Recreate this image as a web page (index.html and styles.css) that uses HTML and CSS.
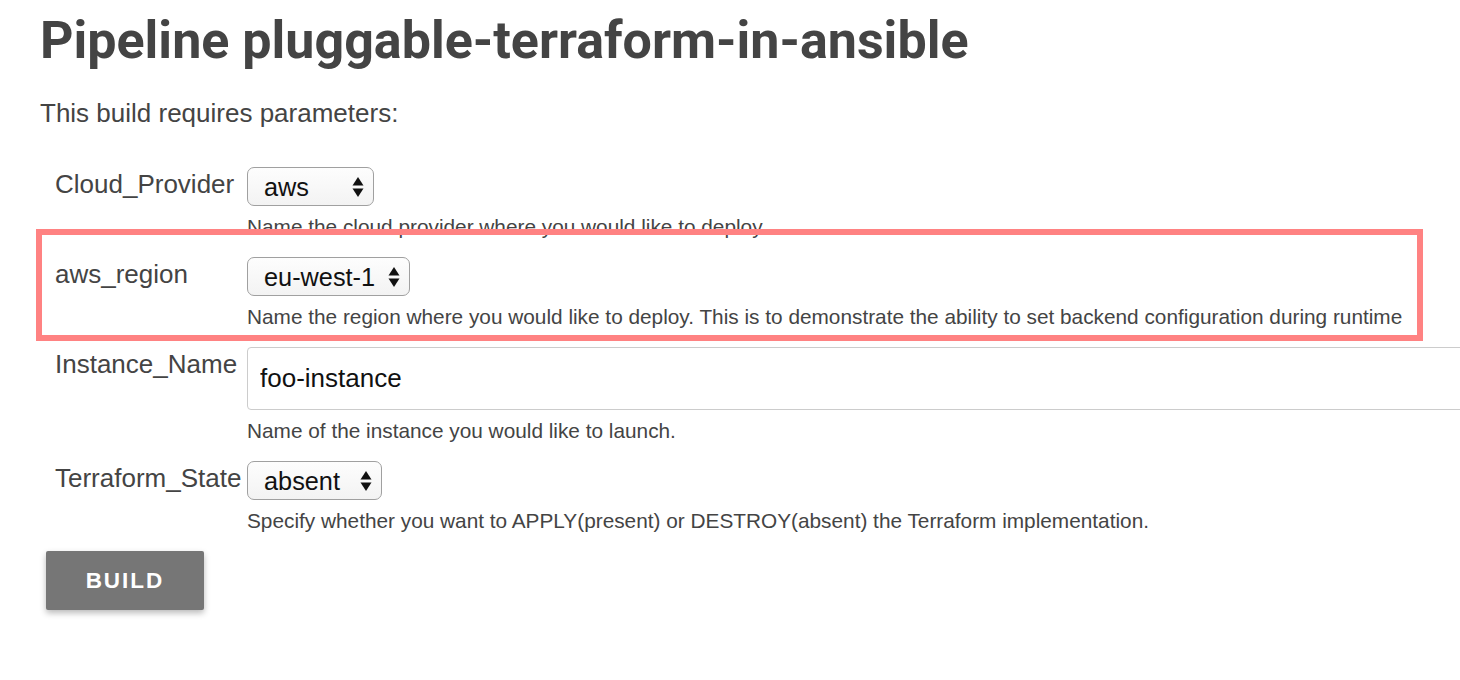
FILE: index.html
```html
<!DOCTYPE html>
<html>
<head>
<meta charset="utf-8">
<link rel="stylesheet" href="styles.css">
</head>
<body>
<div class="page">
  <h1 class="title">Pipeline pluggable-terraform-in-ansible</h1>
  <p class="intro">This build requires parameters:</p>
  <form class="params">
    <div class="row">
      <div class="label">Cloud_Provider</div>
      <div class="field">
        <div class="select-wrap">
          <select class="select w-aws"><option>aws</option></select>
          <svg class="arrows" width="12" height="22" viewBox="0 0 12 22"><path d="M6 1 L11.5 9.5 L0.5 9.5 Z" fill="#111"/><path d="M6 21 L11.5 12.5 L0.5 12.5 Z" fill="#111"/></svg>
        </div>
        <div class="desc">Name the cloud provider where you would like to deploy.</div>
      </div>
    </div>
    <div class="row">
      <div class="label">aws_region</div>
      <div class="field">
        <div class="select-wrap">
          <select class="select w-region"><option>eu-west-1</option></select>
          <svg class="arrows" width="12" height="22" viewBox="0 0 12 22"><path d="M6 1 L11.5 9.5 L0.5 9.5 Z" fill="#111"/><path d="M6 21 L11.5 12.5 L0.5 12.5 Z" fill="#111"/></svg>
        </div>
        <div class="desc">Name the region where you would like to deploy. This is to demonstrate the ability to set backend configuration during runtime</div>
      </div>
    </div>
    <div class="row">
      <div class="label">Instance_Name</div>
      <div class="field">
        <input class="text" type="text" value="foo-instance">
        <div class="desc">Name of the instance you would like to launch.</div>
      </div>
    </div>
    <div class="row">
      <div class="label">Terraform_State</div>
      <div class="field">
        <div class="select-wrap">
          <select class="select w-state"><option>absent</option></select>
          <svg class="arrows" width="12" height="22" viewBox="0 0 12 22"><path d="M6 1 L11.5 9.5 L0.5 9.5 Z" fill="#111"/><path d="M6 21 L11.5 12.5 L0.5 12.5 Z" fill="#111"/></svg>
        </div>
        <div class="desc">Specify whether you want to APPLY(present) or DESTROY(absent) the Terraform implementation.</div>
      </div>
    </div>
    <button class="build" type="button">BUILD</button>
  </form>
  <div class="highlight"></div>
</div>
</body>
</html>
```
FILE: styles.css
```css
html, body {
  margin: 0;
  padding: 0;
  background: #fff;
  overflow: hidden;
}
.page {
  position: relative;
  width: 1460px;
  height: 680px;
  padding: 0 0 0 40px;
  box-sizing: border-box;
  font-family: "Liberation Sans", Arial, sans-serif;
  color: #444;
}
.title {
  margin: 0;
  padding-top: 11px;
  font-family: Roboto, "Liberation Sans", sans-serif;
  font-weight: 700;
  font-size: 52px;
  line-height: 60px;
  color: #444;
  white-space: nowrap;
}
.intro {
  margin: 27px 0 0 0;
  font-size: 26px;
  line-height: 30px;
}
.params {
  margin-top: 39px;
}
.row {
  display: grid;
  grid-template-columns: 207px 1fr;
  margin-bottom: 18px;
}
.label {
  padding: 2px 0 0 15px;
  font-size: 26px;
  line-height: 30px;
  color: #444;
  white-space: nowrap;
}
.field {
  display: flex;
  flex-direction: column;
  align-items: flex-start;
}
.select-wrap {
  position: relative;
  display: inline-block;
}
.select {
  -webkit-appearance: none;
  appearance: none;
  height: 39px;
  box-sizing: border-box;
  border: 1.5px solid #a0a0a0;
  border-radius: 7px;
  background: linear-gradient(#fdfdfd, #f3f3f3);
  font-family: "Liberation Sans", Arial, sans-serif;
  font-size: 25.3px;
  color: #111;
  padding: 0 0 0 16px;
  margin: 0;
  outline: none;
}
.w-aws { width: 127px; }
.w-region { width: 163px; }
.w-state { width: 135px; }
.arrows {
  position: absolute;
  right: 10px;
  top: 8.5px;
  pointer-events: none;
}
.desc {
  margin-top: 9px;
  font-size: 20.8px;
  line-height: 24px;
  color: #444;
  white-space: nowrap;
}
.text {
  width: 1240px;
  height: 63px;
  box-sizing: border-box;
  border: 1.5px solid #ccc;
  border-radius: 4px;
  padding: 0 12px;
  margin: 0;
  font-family: "Liberation Sans", Arial, sans-serif;
  font-size: 26px;
  color: #111;
  outline: none;
}
.build {
  display: block;
  margin: 0 0 0 6px;
  width: 158px;
  height: 59px;
  border: none;
  border-radius: 2px;
  background: #767676;
  color: #fff;
  font-family: "Liberation Sans", Arial, sans-serif;
  font-weight: 700;
  font-size: 22.5px;
  letter-spacing: 2px;
  box-shadow: 0 3px 6px rgba(0,0,0,0.28);
}
.highlight {
  position: absolute;
  left: 36px;
  top: 229px;
  width: 1387px;
  height: 112px;
  box-sizing: border-box;
  border: 6px solid #ff8282;
  pointer-events: none;
}
```
